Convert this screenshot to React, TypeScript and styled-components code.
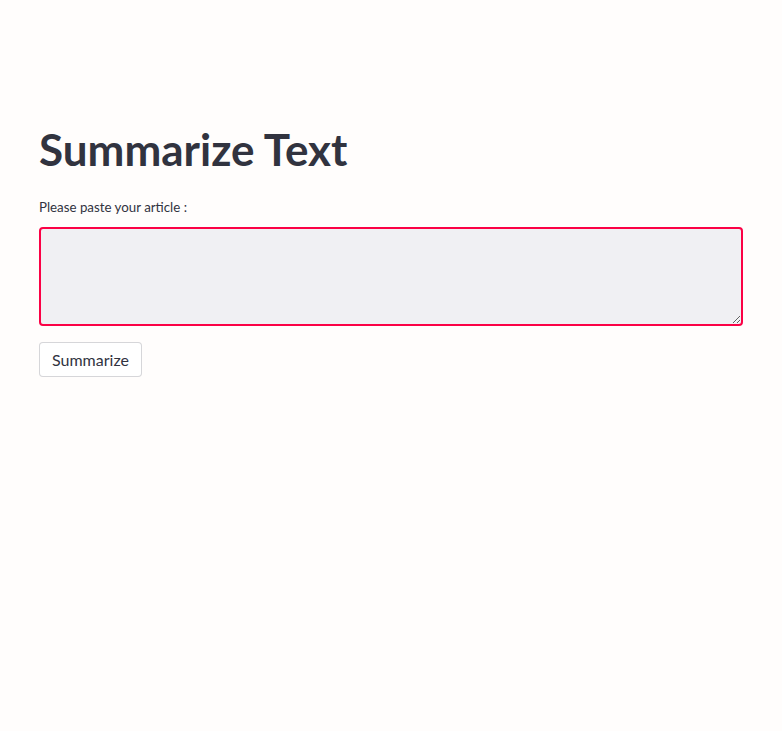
import React, { useState } from 'react';
import styled, { createGlobalStyle } from 'styled-components';

const GlobalStyle = createGlobalStyle`
  html, body {
    margin: 0;
    padding: 0;
    background: #fffdfc;
    font-family: Lato, "Noto Sans", sans-serif;
    color: #31333f;
  }
`;

const Page = styled.div`
  min-height: 731px;
  background: #fffdfc;
`;

const Block = styled.main`
  max-width: 736px;
  margin: 0 auto;
  padding: 96px 16px 40px;
  box-sizing: border-box;
  display: flex;
  flex-direction: column;
  gap: 16px;
`;

const Title = styled.h1`
  margin: 0;
  padding: 27px 0 7px;
  font-size: 44px;
  font-weight: 700;
  line-height: 1.2;
  color: #31333f;
`;

const Field = styled.div`
  display: flex;
  flex-direction: column;
`;

const Label = styled.label`
  font-size: 13.3px;
  line-height: 16px;
  margin-bottom: 12px;
  color: #31333f;
`;

const TextArea = styled.textarea`
  box-sizing: border-box;
  width: 100%;
  height: 99px;
  padding: 16px;
  background: #f0f0f3;
  border: 2px solid #fb0145;
  border-radius: 4px;
  font-family: inherit;
  font-size: 16px;
  color: #31333f;
  outline: none;
  resize: vertical;
`;

const Button = styled.button`
  align-self: flex-start;
  height: 35px;
  padding: 0 12px;
  background: #ffffff;
  border: 1px solid rgba(49, 51, 63, 0.2);
  border-radius: 4px;
  font-family: inherit;
  font-size: 16px;
  color: #31333f;
  cursor: pointer;
`;

export default function App() {
  const [text, setText] = useState('');

  return (
    <Page>
      <GlobalStyle />
      <Block>
        <Title>Summarize Text</Title>
        <Field>
          <Label>Please paste your article :</Label>
          <TextArea value={text} onChange={e => setText(e.target.value)} />
        </Field>
        <Button>Summarize</Button>
      </Block>
    </Page>
  );
}
